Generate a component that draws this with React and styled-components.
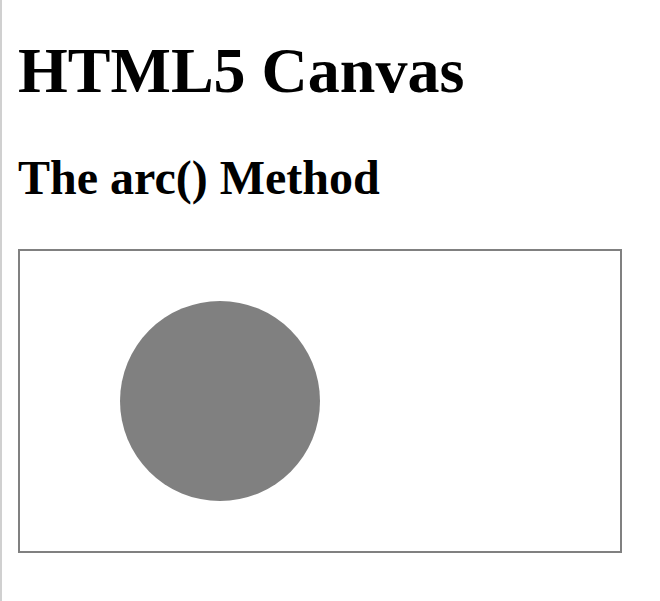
import React from 'react';
import styled, { createGlobalStyle } from 'styled-components';

const GlobalStyle = createGlobalStyle`
  html, body {
    margin: 0;
    padding: 0;
    background: #ffffff;
  }
  body {
    font-family: "Liberation Serif", "Times New Roman", serif;
    color: #000;
  }
`;

const Page = styled.div`
  min-height: 100vh;
  box-sizing: border-box;
  border-left: 2px solid #d0d0d0;
  padding: 1px 16px 0 16px;
`;

const Title = styled.h1`
  font-size: 64px;
  font-weight: bold;
  margin: 33px 0 0;
  line-height: 1.15;
`;

const SubTitle = styled.h2`
  font-size: 48px;
  font-weight: bold;
  margin: 42px 0 0;
  line-height: 1.15;
`;

const CanvasBox = styled.div`
  width: 600px;
  height: 300px;
  margin-top: 44px;
  border: 2px solid #808080;
`;

const Circle = styled.circle`
  fill: #808080;
`;

const App = () => {
  return (
    <Page>
      <GlobalStyle />
      <Title>HTML5 Canvas</Title>
      <SubTitle>The arc() Method</SubTitle>
      <CanvasBox>
        <svg width="600" height="300" viewBox="0 0 600 300">
          <Circle cx="200" cy="150" r="100" />
        </svg>
      </CanvasBox>
    </Page>
  );
};

export default App;
